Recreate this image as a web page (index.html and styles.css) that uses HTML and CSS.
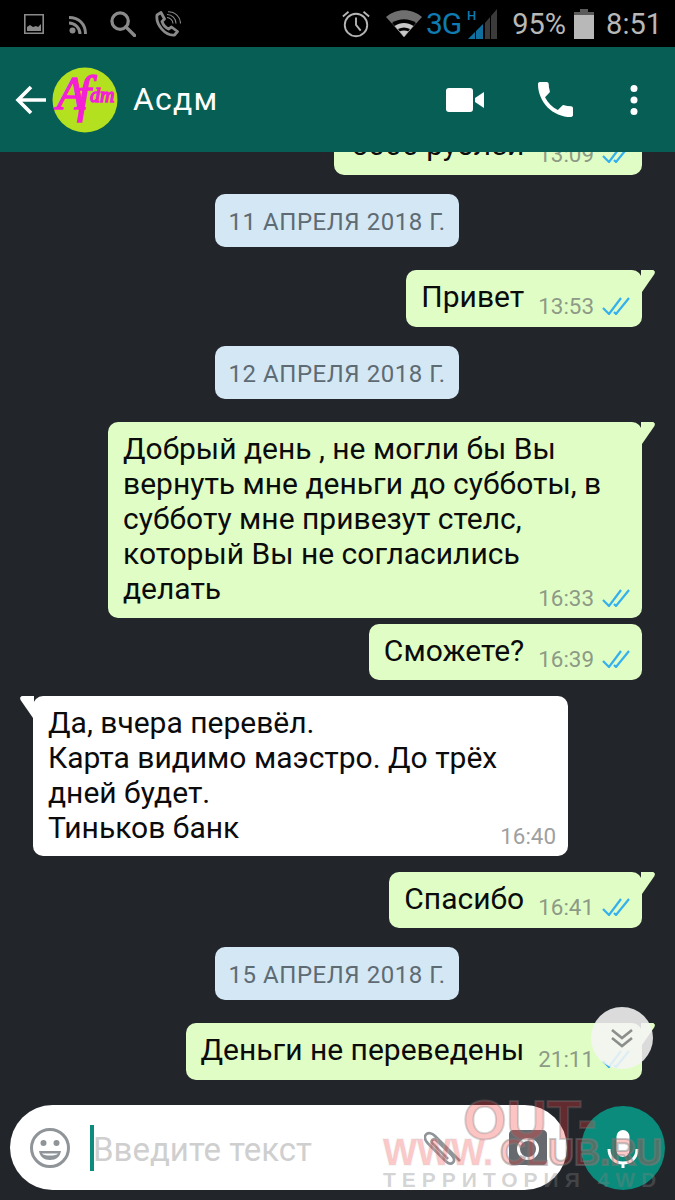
FILE: index.html
```html
<!DOCTYPE html>
<html lang="ru">
<head>
    <meta charset="UTF-8">
    <meta name="viewport" content="width=device-width, initial-scale=1.0">
    <title>Асдм</title>
    <link rel="stylesheet" href="styles.css">
</head>
<body>
    <svg class="sprites" width="0" height="0">
        <symbol id="checks" viewBox="0 0 28 18">
            <path d="M1 11l6 6L19 1M12 15l2 2L27 1" fill="none" stroke="#35b0ee" stroke-width="2.200"/>
        </symbol>
    </svg>

    <div class="status-bar">
        <div class="status-left">
            <svg class="ic" width="20" height="20" viewBox="0 0 20 20"><path d="M.8.8h18.400v18.400H.8z" fill="none" stroke="#8a8a8a" stroke-width="1.600"/><path d="M3 17v-4l3-2 3 2 3-1 2 1 3-3v7z" fill="#8a8a8a"/></svg>
            <svg class="ic ic-rss" width="18" height="18" viewBox="0 0 18 18"><circle cx="3.500" cy="14.500" r="3" fill="#8a8a8a"/><path d="M0 7c6 0 11 5 11 11M0 1.500c10 0 16.500 6.500 16.500 16.500" fill="none" stroke="#8a8a8a" stroke-width="3"/></svg>
            <svg class="ic ic-search" width="26" height="26" viewBox="0 0 27 27"><circle cx="10.500" cy="10.500" r="8.500" fill="none" stroke="#8a8a8a" stroke-width="3.400"/><path d="M16.500 16.500l9 9" stroke="#8a8a8a" stroke-width="3.600" stroke-linecap="round"/></svg>
            <svg class="ic ic-wifi-call" width="26" height="26" viewBox="0 0 26 26"><path d="M2 4l4-2.500 3.500 6.500-2.500 2.500c1 3 3.500 6 6.500 7.500l3-2 6 4.500-3 3.500c-9 1-19-10-17.500-20z" fill="none" stroke="#8a8a8a" stroke-width="2.800" stroke-linejoin="round"/><path d="M12 3.500c5 0 9 4 9 9M13 .8c7 0 12.500 5 12.500 11.700M12 6.500c3 0 6 3 6 6" fill="none" stroke="#8a8a8a" stroke-width="1.100"/></svg>
        </div>
        <div class="status-right">
            <svg class="alarm" width="30" height="30" viewBox="0 0 32 32"><circle cx="16" cy="17" r="12" fill="none" stroke="#b5b5b5" stroke-width="2"/><path d="M16 9v8l5 6" fill="none" stroke="#b5b5b5" stroke-width="2"/><path d="M2 8l6-5M30 8l-6-5" stroke="#b5b5b5" stroke-width="2"/></svg>
            <svg class="wifi" width="36" height="28" viewBox="0 0 36 28"><path d="M18 27L0 7c10-9 26-9 36 0z" fill="#6f6f6f"/><path d="M18 27L6 13c7-5 17-5 24 0z" fill="#000"/><path d="M18 27L8.500 16c6-4 13-4 19 0z" fill="#c8c8c8"/><path d="M18 27l-6-8c4-2 8-2 12 0z" fill="#000"/><path d="M18 27l-4.500-5.500c3-1.500 6-1.500 9 0z" fill="#c8c8c8"/></svg>
            <span class="net">3G</span>
            <svg class="signal" width="31" height="30" viewBox="0 0 31 30"><text x="0" y="11" class="net-h">H</text><path d="M1 30h7v-7z" fill="#0f6f9f"/><path d="M9 30h7V15l-7 7z" fill="#0f6f9f"/><path d="M18 30h5V8l-5 6z" fill="#3b3b3b"/><path d="M24 30h6V0l-6 7z" fill="#3b3b3b"/></svg>
            <span class="battery-text">95%</span>
            <svg class="battery" width="20" height="30" viewBox="0 0 20 30"><path d="M6 0h8v3h6v27H0V3h6z" fill="#b8b8b8"/><path d="M6 0h8v3h6v3H0V3h6z" fill="#5a5a5a"/></svg>
            <span class="clock">8:51</span>
        </div>
    </div>

    <header class="chat-header">
        <svg class="back" width="32" height="30" viewBox="0 0 32 30"><path d="M31 15H3M16 2L3 15l13 13" fill="none" stroke="#fff" stroke-width="3.600"/></svg>
        <svg class="avatar" width="66" height="66" viewBox="0 0 66 66">
            <circle cx="33" cy="33" r="32.500" fill="#b3e01f"/>
            <text class="avatar-sign" x="5" y="42"><tspan class="sign-a">A</tspan><tspan class="sign-f" dx="-8" dy="2">f</tspan><tspan class="sign-dm" dx="-1" dy="-9">dm</tspan></text>
        </svg>
        <h1 class="contact">Асдм</h1>
        <div class="header-actions">
            <svg width="38" height="24" viewBox="0 0 38 24"><rect x="0" y="0" width="27" height="24" rx="3" fill="#fff"/><path d="M29 10l9-6v16l-9-6z" fill="#fff"/></svg>
            <svg width="35" height="35" viewBox="3 3 18 18"><path d="M6.620 10.790c1.440 2.830 3.760 5.140 6.590 6.590l2.200-2.200c.270-.270.670-.360 1.020-.240 1.120.370 2.330.570 3.570.570.550 0 1 .450 1 1V20c0 .550-.450 1-1 1-9.390 0-17-7.610-17-17 0-.550.450-1 1-1h3.500c.550 0 1 .450 1 1 0 1.250.200 2.450.570 3.570.110.350.030.740-.250 1.020l-2.200 2.200z" fill="#fff"/></svg>
            <svg class="dots" width="8" height="30" viewBox="0 0 8 30"><circle cx="4" cy="3.500" r="3.500" fill="#fff"/><circle cx="4" cy="15" r="3.500" fill="#fff"/><circle cx="4" cy="26.500" r="3.500" fill="#fff"/></svg>
        </div>
    </header>

    <main class="chat">
        <div class="msg out cut">
            <span class="msg-text">5000 рублей</span>
            <span class="meta">13:09 <svg class="tick"><use href="#checks"/></svg></span>
        </div>

        <div class="date">11 АПРЕЛЯ 2018 Г.</div>

        <div class="msg out tail">
            <span class="msg-text">Привет</span>
            <span class="meta">13:53 <svg class="tick"><use href="#checks"/></svg></span>
        </div>

        <div class="date">12 АПРЕЛЯ 2018 Г.</div>

        <div class="msg out tail block">
            <p class="msg-text">Добрый день , не могли бы Вы<br>вернуть мне деньги до субботы, в<br>субботу мне привезут стелс,<br>который Вы не согласились<br>делать</p>
            <span class="meta">16:33 <svg class="tick"><use href="#checks"/></svg></span>
        </div>

        <div class="msg out near">
            <span class="msg-text">Сможете?</span>
            <span class="meta">16:39 <svg class="tick"><use href="#checks"/></svg></span>
        </div>

        <div class="msg in tail block">
            <p class="msg-text">Да, вчера перевёл.<br>Карта видимо маэстро. До трёх<br>дней будет.<br>Тиньков банк</p>
            <span class="meta">16:40</span>
        </div>

        <div class="msg out tail short">
            <span class="msg-text">Спасибо</span>
            <span class="meta">16:41 <svg class="tick"><use href="#checks"/></svg></span>
        </div>

        <div class="date">15 АПРЕЛЯ 2018 Г.</div>

        <div class="msg out tail">
            <span class="msg-text">Деньги не переведены</span>
            <span class="meta">21:11 <svg class="tick"><use href="#checks"/></svg></span>
        </div>
    </main>

    <footer class="composer">
        <div class="input">
            <svg width="42" height="42" viewBox="0 0 42 42"><circle cx="21" cy="21" r="18.500" fill="none" stroke="#8f9499" stroke-width="3"/><circle cx="14.500" cy="16" r="3" fill="#8f9499"/><circle cx="27.500" cy="16" r="3" fill="#8f9499"/><path d="M10 24h22c-1 6-5 9-11 9s-10-3-11-9z" fill="#8f9499"/><path d="M13 26.500h16c-1 1.500-4 2-8 2s-7-.5-8-2z" fill="#fff"/></svg>
            <span class="caret"></span>
            <span class="placeholder">Введите текст</span>
            <svg class="clip" width="38" height="36" viewBox="0 0 38 36"><path d="M36 31L11 6C8 3 4 2 2 4.500s-1 6 2 9l17 17c3 3 6 4 8 2s1-5-2-8L12 10c-1-1-2.500-1-3.500 0s-1 2.500 0 3.500L24 29" fill="none" stroke="#8f9499" stroke-width="2.600"/></svg>
            <svg class="camera" width="38" height="35" viewBox="0 0 38 35"><path d="M4 0h30c2 0 4 2 4 4v27c0 2-2 4-4 4H4c-2 0-4-2-4-4V4c0-2 2-4 4-4z" fill="#666a6e"/><circle cx="19" cy="19" r="9.500" fill="none" stroke="#fff" stroke-width="3"/></svg>
        </div>
        <button class="mic">
            <svg class="mic-icon" width="32" height="38" viewBox="0 0 32 38"><rect x="9.500" y="0" width="13" height="27" rx="6.500" fill="#fff"/><path d="M2 19c0 9 6 14 14 14s14-5 14-14M16 33v5" fill="none" stroke="#fff" stroke-width="3"/></svg>
        </button>
    </footer>

    <button class="scroll-down">
        <svg width="22" height="20" viewBox="0 0 22 20"><path d="M1 2l10 8 10-8M1 10l10 8 10-8" fill="none" stroke="#8b8f8c" stroke-width="2.600"/></svg>
    </button>

    <div class="watermark">
        <div class="wm-top">OUT-</div>
        <div class="wm-mid">WWW.<span class="wm-dark">CLUB.RU</span></div>
        <div class="wm-bot">ТЕРРИТОРИЯ 4WD</div>
    </div>
</body>
</html>
```

FILE: styles.css
```css
* {
    box-sizing: border-box;
}

body {
    margin: 0;
    width: 675px;
    height: 1200px;
    position: relative;
    overflow: hidden;
    display: flex;
    flex-direction: column;
    background-color: #22252a;
    font-family: Roboto, "Noto Sans", sans-serif;
}

.sprites {
    position: absolute;
}

/* status bar */
.status-bar {
    height: 47px;
    flex: none;
    background-color: #000;
    display: flex;
    justify-content: space-between;
    align-items: center;
    padding: 0 13px 0 24px;
    position: relative;
    z-index: 3;
}

.status-left,
.status-right {
    display: flex;
    align-items: center;
}

.status-left {
    gap: 24px;
}

.ic-rss {
    margin-left: 1px;
    margin-top: 2px;
}

.ic-search {
    margin-left: -1px;
}

.ic-wifi-call {
    margin-left: -5px;
}

.status-right {
    gap: 6px;
    color: #b8b8b8;
    font-size: 29px;
}

.alarm {
    margin-right: 9px;
}

.net {
    color: #0f7bb0;
    font-size: 30px;
    letter-spacing: -1px;
    margin-left: -2px;
}

.net-h {
    fill: #0f7bb0;
    font-size: 13px;
    font-weight: 500;
}

.battery-text {
    margin-left: 8px;
    margin-right: 2px;
}

.clock {
    margin-left: 6px;
}

/* header */
.chat-header {
    height: 105px;
    flex: none;
    background-color: #075e55;
    display: flex;
    align-items: center;
    padding-left: 15px;
    position: relative;
    z-index: 2;
}

.back {
    flex: none;
    margin-right: 5px;
}

.avatar {
    flex: none;
}

.avatar-sign {
    fill: #f51fd5;
    stroke: #f51fd5;
    stroke-width: 1.4px;
    font-family: "Liberation Serif", serif;
    font-style: italic;
}

.sign-a {
    font-size: 46px;
}

.sign-f {
    font-size: 50px;
}

.sign-dm {
    font-size: 20px;
}

.contact {
    margin: -2px 0 0 15px;
    color: #fff;
    font-size: 32px;
    font-weight: 400;
    letter-spacing: 1.2px;
}

.header-actions {
    margin-left: auto;
    margin-right: 37px;
    display: flex;
    align-items: center;
    gap: 54px;
}

.dots {
    margin-left: 3px;
}

/* messages */
.chat {
    flex: 1;
    min-height: 0;
    display: flex;
    flex-direction: column;
    align-items: flex-end;
    padding: 0 33px;
}

.msg {
    position: relative;
    border-radius: 10px;
    font-size: 30px;
    line-height: 35px;
    color: #0b0b0b;
    display: flex;
    padding: 9px 12px 13px 15px;
    gap: 14px;
    margin-top: 16px;
}

.msg-text {
    margin: 0;
}

.out {
    background-color: #e0fdc6;
}

.in {
    background-color: #fff;
    align-self: flex-start;
    width: 535px;
}

.block {
    display: block;
    padding: 9px 12px 12px 15px;
}

.in.block {
    padding-bottom: 11px;
}

.out.block {
    width: 534px;
}

.near {
    margin-top: 6px;
    padding-bottom: 12px;
}

.short {
    padding-bottom: 12px;
}

.cut {
    margin-top: -34px;
    width: 308px;
    justify-content: flex-end;
}

.tail::after {
    content: "";
    position: absolute;
    top: 0;
    width: 14px;
    height: 22px;
}

.out.tail::after {
    left: calc(100% - 1px);
    background-color: #e0fdc6;
    clip-path: polygon(0 0, 88% 0, 100% 8%, 96% 18%, 7% 100%, 0 100%);
}

.in.tail::after {
    right: calc(100% - 1px);
    background-color: #fff;
    clip-path: polygon(12% 0, 100% 0, 100% 100%, 93% 100%, 4% 18%, 0 8%);
}

.meta {
    align-self: flex-end;
    display: flex;
    align-items: center;
    gap: 8px;
    font-size: 22.4px;
    line-height: 24px;
    color: #8d9a86;
    white-space: nowrap;
    margin-bottom: -4px;
}

.near .meta,
.short .meta {
    margin-bottom: -3px;
}

.in .meta {
    color: #a0a0a0;
}

.block .meta {
    position: absolute;
    right: 12px;
    bottom: 8px;
    margin-bottom: 0;
}

.tick {
    width: 28px;
    height: 18px;
}

.date {
    align-self: center;
    height: 53px;
    width: 244px;
    margin: 19px 1px 7px 0;
    padding-top: 2px;
    border-radius: 10px;
    background-color: #d3e7f5;
    color: #5f6b73;
    font-size: 24px;
    letter-spacing: 0.55px;
    display: flex;
    align-items: center;
    justify-content: center;
}

/* bottom bar */
.composer {
    flex: none;
    height: 95px;
    padding: 0 10px 10px 10px;
    display: flex;
    gap: 14px;
    align-items: flex-end;
}

.input {
    width: 558px;
    height: 85px;
    border-radius: 43px;
    background-color: #fff;
    display: flex;
    align-items: center;
    padding: 0 20px 0 19px;
}

.caret {
    width: 4px;
    height: 46px;
    background-color: #0e8c7b;
    margin-left: 19px;
    flex: none;
}

.placeholder {
    color: #cfcfcf;
    font-size: 33px;
    margin-left: -1px;
    margin-right: auto;
    padding-top: 3px;
    white-space: nowrap;
}

.clip {
    margin-right: 47px;
}

.mic {
    width: 84px;
    height: 84px;
    border: none;
    border-radius: 50%;
    background-color: #0b8b7b;
    display: flex;
    align-items: center;
    justify-content: center;
    padding: 0;
}

.mic-icon {
    margin-top: 2px;
}

.scroll-down {
    position: absolute;
    left: 591px;
    top: 1007px;
    width: 62px;
    height: 62px;
    border: none;
    border-radius: 50%;
    background-color: rgba(245, 245, 245, 0.88);
    display: flex;
    align-items: center;
    justify-content: center;
    padding: 0;
}

/* watermark over the composer */
.watermark {
    position: absolute;
    left: 383px;
    top: 1100px;
    width: 285px;
    font-family: "Liberation Sans", sans-serif;
    font-weight: 700;
    pointer-events: none;
}

.wm-top {
    font-size: 56px;
    line-height: 40px;
    margin-left: 80px;
    color: rgba(250, 60, 60, 0.3);
    -webkit-text-stroke: 2px rgba(125, 125, 125, 0.3);
}

.wm-mid {
    font-size: 36px;
    line-height: 26px;
    color: rgba(250, 60, 60, 0.3);
    -webkit-text-stroke: 2px rgba(210, 210, 210, 0.2);
    white-space: nowrap;
}

.wm-dark {
    margin-left: 7px;
    -webkit-text-stroke: 2px rgba(125, 125, 125, 0.45);
}

.wm-bot {
    font-size: 21px;
    line-height: 22px;
    margin-top: 3px;
    letter-spacing: 6px;
    color: rgba(130, 130, 130, 0.35);
    white-space: nowrap;
}
```
